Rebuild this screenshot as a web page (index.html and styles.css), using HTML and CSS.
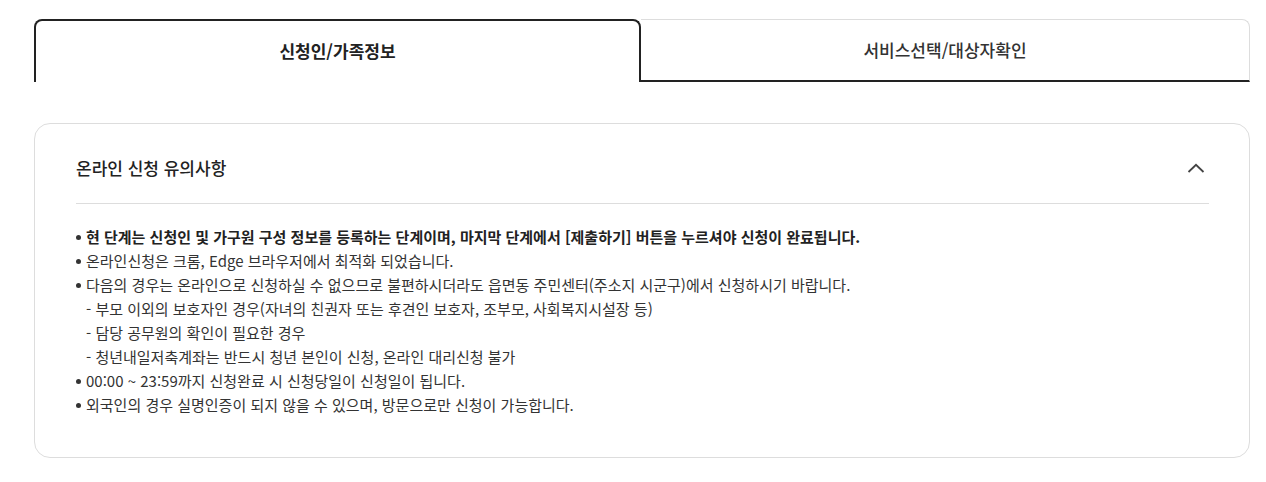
FILE: index.html
```html
<!DOCTYPE html>
<html lang="ko">
<head>
<meta charset="utf-8">
<link rel="stylesheet" href="styles.css">
</head>
<body>
<div class="page">
  <div class="tabs">
    <div class="tab active">신청인/가족정보</div>
    <div class="tab">서비스선택/대상자확인</div>
  </div>
  <div class="card">
    <div class="card-head">
      <h2 class="card-title">온라인 신청 유의사항</h2>
      <svg class="chev" width="18" height="10" viewBox="0 0 18 10"><path d="M1.5 9 L9 1.8 L16.5 9" fill="none" stroke="#444" stroke-width="1.8"/></svg>
    </div>
    <ul class="notes">
      <li class="strong">현 단계는 신청인 및 가구원 구성 정보를 등록하는 단계이며, 마지막 단계에서 [제출하기] 버튼을 누르셔야 신청이 완료됩니다.</li>
      <li>온라인신청은 크롬, Edge 브라우저에서 최적화 되었습니다.</li>
      <li>다음의 경우는 온라인으로 신청하실 수 없으므로 불편하시더라도 읍면동 주민센터(주소지 시군구)에서 신청하시기 바랍니다.
        <div class="sub">- 부모 이외의 보호자인 경우(자녀의 친권자 또는 후견인 보호자, 조부모, 사회복지시설장 등)</div>
        <div class="sub">- 담당 공무원의 확인이 필요한 경우</div>
        <div class="sub">- 청년내일저축계좌는 반드시 청년 본인이 신청, 온라인 대리신청 불가</div>
      </li>
      <li>00:00 ~ 23:59까지 신청완료 시 신청당일이 신청일이 됩니다.</li>
      <li>외국인의 경우 실명인증이 되지 않을 수 있으며, 방문으로만 신청이 가능합니다.</li>
    </ul>
  </div>
</div>
</body>
</html>
```
FILE: styles.css
```css
* { box-sizing: border-box; }
body {
  margin: 0;
  background: #fff;
  font-family: "Noto Sans CJK KR", "Noto Sans", sans-serif;
  color: #333;
}
.page {
  padding: 19px 16px 0 34px;
}
.tabs {
  display: flex;
  height: 63px;
}
.tab {
  display: flex;
  align-items: center;
  justify-content: center;
  font-size: 17px;
  font-weight: 500;
  color: #333;
  padding-bottom: 2px;
}
.tab.active {
  flex: 0 0 607px;
  border: 2px solid #222;
  border-bottom: none;
  border-radius: 8px 8px 0 0;
  font-weight: 700;
  color: #222;
}
.tab:not(.active) {
  flex: 1;
  border-top: 1px solid #ddd;
  border-right: 1px solid #ddd;
  border-bottom: 2px solid #222;
  border-radius: 0 8px 0 0;
}
.card {
  margin-top: 41px;
  border: 1px solid #ddd;
  border-radius: 16px;
  padding: 31px 40px 40px 41px;
}
.card-head {
  display: flex;
  align-items: center;
  justify-content: space-between;
  padding-bottom: 23px;
  border-bottom: 1px solid #ddd;
}
.card-title {
  margin: 0;
  font-size: 17px;
  font-weight: 500;
  line-height: 25px;
  color: #222;
}
.chev { margin-right: 4px; }
.notes {
  list-style: none;
  margin: 21px 0 0;
  padding: 0;
  font-size: 15px;
  line-height: 24px;
  color: #333;
}
.notes li {
  position: relative;
  padding-left: 10px;
}
.notes li::before {
  content: "";
  position: absolute;
  left: 0;
  top: 10px;
  width: 5px;
  height: 5px;
  border-radius: 50%;
  background: #333;
}
.notes li.strong {
  font-weight: 700;
  color: #222;
}
```
